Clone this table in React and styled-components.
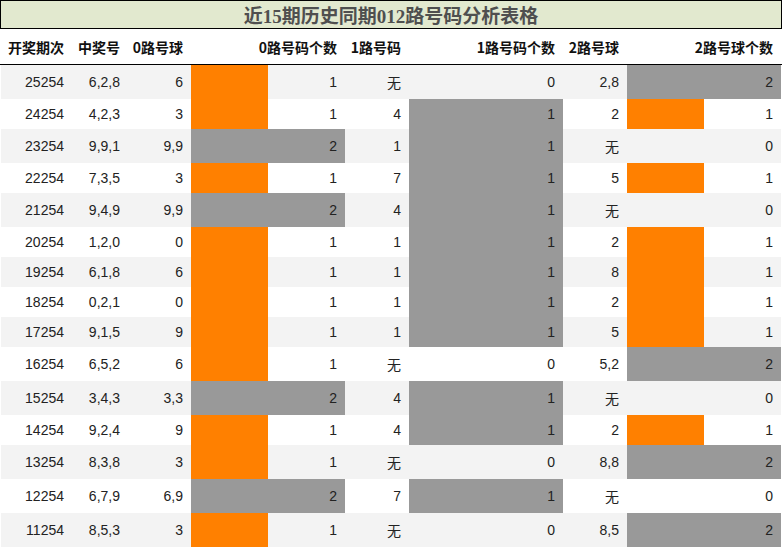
import React from "react";
import styled, { createGlobalStyle } from "styled-components";

const Global = createGlobalStyle`
  html, body { margin: 0; padding: 0; background: #fff; }
  body { font-family: "Liberation Sans", "Noto Sans CJK SC", sans-serif; }
`;

const COLS = "71px 56px 63px 154px 64px 154px 64px 154px";

const Sheet = styled.div`
  width: 782px;
  display: flex;
  flex-direction: column;
`;

const Title = styled.div`
  height: 27px;
  border: 1px solid #000;
  background: #e2e9cf;
  display: flex;
  align-items: center;
  justify-content: center;
  font-family: "Liberation Serif", "Noto Sans CJK SC", serif;
  font-weight: bold;
  font-size: 19px;
  color: #4f4f4f;
`;

const Grid = styled.div`
  display: grid;
  grid-template-columns: ${COLS};
  padding: 0 1px;
`;

const HeaderRow = styled(Grid)`
  height: 35px;
  border-bottom: 1px solid #000;
`;

const HeadCell = styled.div`
  display: flex;
  align-items: center;
  justify-content: flex-end;
  padding-right: 8px;
  font-family: "Noto Sans CJK SC", sans-serif;
  font-weight: bold;
  font-size: 14px;
  color: #111;
  white-space: nowrap;
`;

const Row = styled(Grid)`
  height: ${(p) => (p.$tall ? 34 : 30)}px;
  & > * { background: ${(p) => (p.$odd ? "#f3f3f3" : "#ffffff")}; }
`;

const Cell = styled.div`
  position: relative;
  display: flex;
  align-items: center;
  justify-content: flex-end;
  padding-right: 8px;
  font-size: 14px;
  color: #222;
  white-space: nowrap;
`;

const Bar = styled.div`
  position: absolute;
  left: 0;
  top: 0;
  bottom: 0;
  background: ${(p) => (p.$full ? "#999999" : "#ff8000")};
`;

const Value = styled.span`
  position: relative;
`;

const data = [
  ["25254", "6,2,8", "6", 1, "无", 0, "2,8", 2],
  ["24254", "4,2,3", "3", 1, "4", 1, "2", 1],
  ["23254", "9,9,1", "9,9", 2, "1", 1, "无", 0],
  ["22254", "7,3,5", "3", 1, "7", 1, "5", 1],
  ["21254", "9,4,9", "9,9", 2, "4", 1, "无", 0],
  ["20254", "1,2,0", "0", 1, "1", 1, "2", 1],
  ["19254", "6,1,8", "6", 1, "1", 1, "8", 1],
  ["18254", "0,2,1", "0", 1, "1", 1, "2", 1],
  ["17254", "9,1,5", "9", 1, "1", 1, "5", 1],
  ["16254", "6,5,2", "6", 1, "无", 0, "5,2", 2],
  ["15254", "3,4,3", "3,3", 2, "4", 1, "无", 0],
  ["14254", "9,2,4", "9", 1, "4", 1, "2", 1],
  ["13254", "8,3,8", "3", 1, "无", 0, "8,8", 2],
  ["12254", "6,7,9", "6,9", 2, "7", 1, "无", 0],
  ["11254", "8,5,3", "3", 1, "无", 0, "8,5", 2],
];

const headers = ["开奖期次", "中奖号", "0路号球", "0路号码个数", "1路号码", "1路号码个数", "2路号球", "2路号球个数"];

const maxOf = (i) => Math.max(...data.map((r) => r[i]));
const max0 = maxOf(3), max1 = maxOf(5), max2 = maxOf(7);

function BarCell({ value, max }) {
  return (
    <Cell>
      {value > 0 && <Bar $full={value === max} style={{ width: `${(value / max) * 100}%` }} />}
      <Value>{value}</Value>
    </Cell>
  );
}

export default function App() {
  return (
    <>
      <Global />
      <Sheet>
        <Title>近15期历史同期012路号码分析表格</Title>
        <HeaderRow>
          {headers.map((h) => (
            <HeadCell key={h}>{h}</HeadCell>
          ))}
        </HeaderRow>
        {data.map((r, i) => (
          <Row key={r[0]} $odd={i % 2 === 0} $tall={r.includes("无")}>
            <Cell>{r[0]}</Cell>
            <Cell>{r[1]}</Cell>
            <Cell>{r[2]}</Cell>
            <BarCell value={r[3]} max={max0} />
            <Cell>{r[4]}</Cell>
            <BarCell value={r[5]} max={max1} />
            <Cell>{r[6]}</Cell>
            <BarCell value={r[7]} max={max2} />
          </Row>
        ))}
      </Sheet>
    </>
  );
}
